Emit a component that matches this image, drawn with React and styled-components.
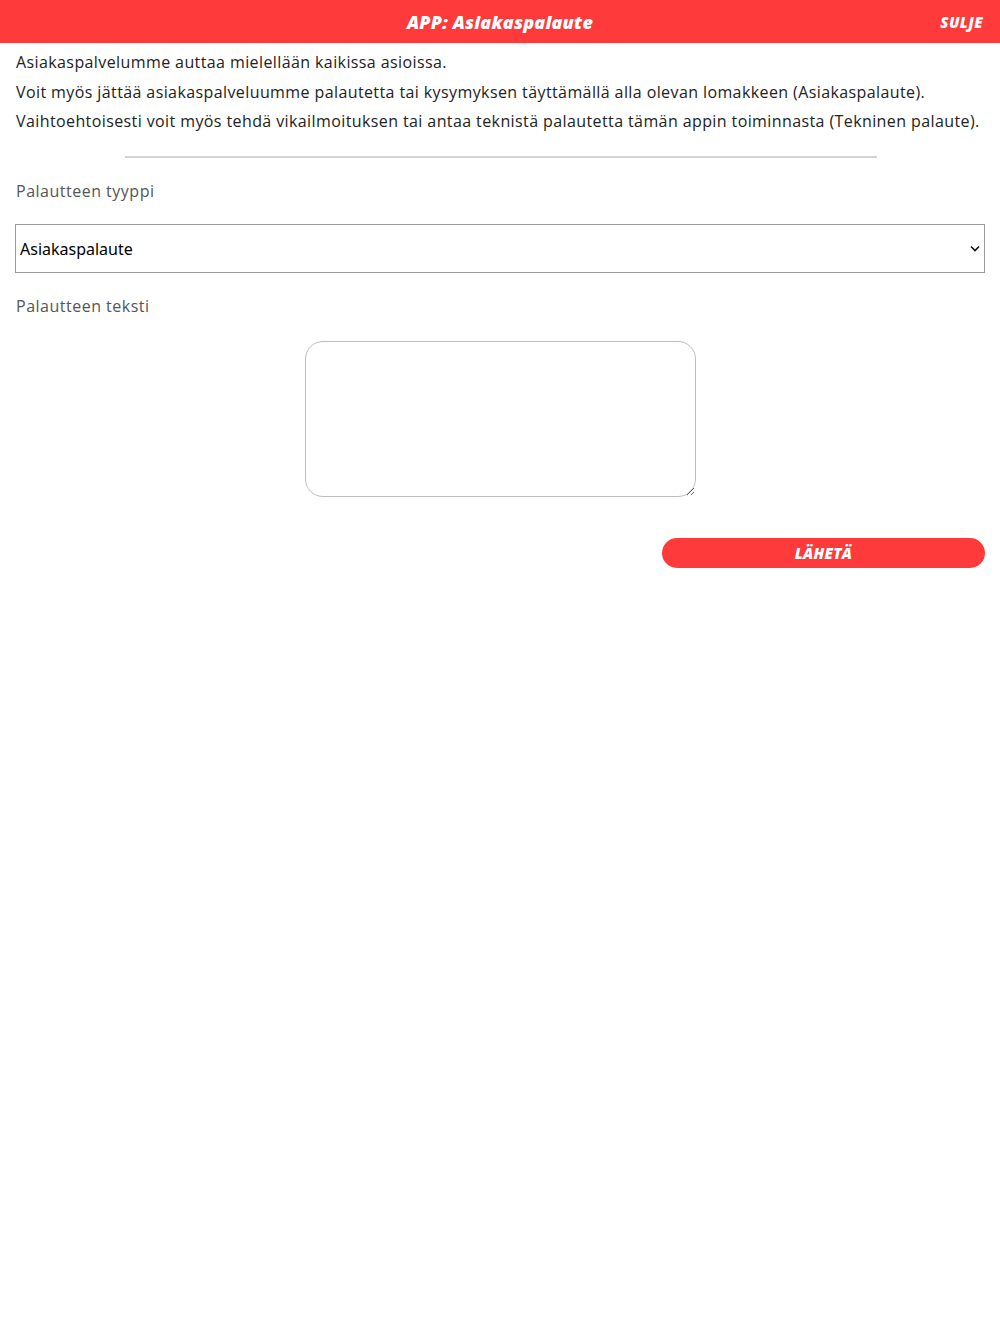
import React, { useState } from "react";
import styled, { createGlobalStyle } from "styled-components";

const GlobalStyle = createGlobalStyle`
  body {
    margin: 0;
    background: #fff;
    font-family: "Open Sans", "Noto Sans", sans-serif;
  }
`;

const RED = "#ff3a3a";

const Header = styled.header`
  height: 43px;
  background: ${RED};
  display: grid;
  grid-template-columns: 1fr auto 1fr;
  align-items: center;
  padding: 0 17px;
  color: #fff;
  font-weight: 800;
  font-style: italic;
`;

const Title = styled.h1`
  grid-column: 2;
  margin: 0;
  font-size: 18px;
  font-weight: 800;
  letter-spacing: 0.2px;
`;

const CloseButton = styled.button`
  justify-self: end;
  background: none;
  border: 0;
  padding: 0;
  color: #fff;
  font: inherit;
  font-size: 15px;
  letter-spacing: 0.4px;
  cursor: pointer;
`;

const Content = styled.main`
  padding: 5px 15px 0 16px;
`;

const Intro = styled.p`
  margin: 0;
  font-size: 16px;
  line-height: 29.5px;
  color: #222;
  letter-spacing: 0.4px;
`;

const Divider = styled.hr`
  width: 752px;
  margin: 19px auto 0;
  border: 0;
  border-top: 2px solid #d4d4d4;
`;

const Label = styled.label`
  display: block;
  margin: ${(p) => p.$top}px 0 0;
  font-size: 16px;
  color: #555;
  letter-spacing: 0.5px;
`;

const SelectWrap = styled.div`
  position: relative;
  margin: 22px 0 0 -1px;
`;

const Select = styled.select`
  width: 100%;
  height: 49px;
  appearance: none;
  border: 1px solid #9a9a9a;
  background: #fff;
  padding: 2px 30px 0 4px;
  font-family: "Noto Sans", sans-serif;
  font-size: 16px;
  color: #000;
  border-radius: 0;
`;

const Chevron = styled.svg`
  position: absolute;
  right: 5px;
  top: 21px;
  pointer-events: none;
`;

const TextArea = styled.textarea`
  display: block;
  width: 391px;
  height: 156px;
  box-sizing: border-box;
  margin: 24px auto 0;
  border: 1px solid #bdbdbd;
  border-radius: 18px;
  padding: 10px;
  font-family: "Open Sans", sans-serif;
  font-size: 15px;
  resize: both;
`;

const Actions = styled.div`
  display: flex;
  justify-content: flex-end;
  margin-top: 41px;
`;

const SendButton = styled.button`
  width: 323px;
  height: 30px;
  border: 0;
  border-radius: 15px;
  background: ${RED};
  color: #fff;
  font-family: "Open Sans", sans-serif;
  font-weight: 800;
  font-style: italic;
  font-size: 15px;
  letter-spacing: 0.3px;
  cursor: pointer;
`;

export default function App() {
  const [type, setType] = useState("asiakas");
  const [text, setText] = useState("");

  return (
    <>
      <GlobalStyle />
      <Header>
        <Title>APP: Asiakaspalaute</Title>
        <CloseButton>SULJE</CloseButton>
      </Header>
      <Content>
        <Intro>Asiakaspalvelumme auttaa mielellään kaikissa asioissa.</Intro>
        <Intro>
          Voit myös jättää asiakaspalveluumme palautetta tai kysymyksen täyttämällä alla olevan lomakkeen (Asiakaspalaute).
        </Intro>
        <Intro>
          Vaihtoehtoisesti voit myös tehdä vikailmoituksen tai antaa teknistä palautetta tämän appin toiminnasta (Tekninen palaute).
        </Intro>
        <Divider />
        <Label $top={22}>Palautteen tyyppi</Label>
        <SelectWrap>
          <Select value={type} onChange={(e) => setType(e.target.value)}>
            <option value="asiakas">Asiakaspalaute</option>
            <option value="tekninen">Tekninen palaute</option>
          </Select>
          <Chevron width="10" height="7" viewBox="0 0 10 7">
            <path d="M1 1.5 L5 5.5 L9 1.5" fill="none" stroke="#111" strokeWidth="1.6" />
          </Chevron>
        </SelectWrap>
        <Label $top={22}>Palautteen teksti</Label>
        <TextArea value={text} onChange={(e) => setText(e.target.value)} />
        <Actions>
          <SendButton>LÄHETÄ</SendButton>
        </Actions>
      </Content>
    </>
  );
}
